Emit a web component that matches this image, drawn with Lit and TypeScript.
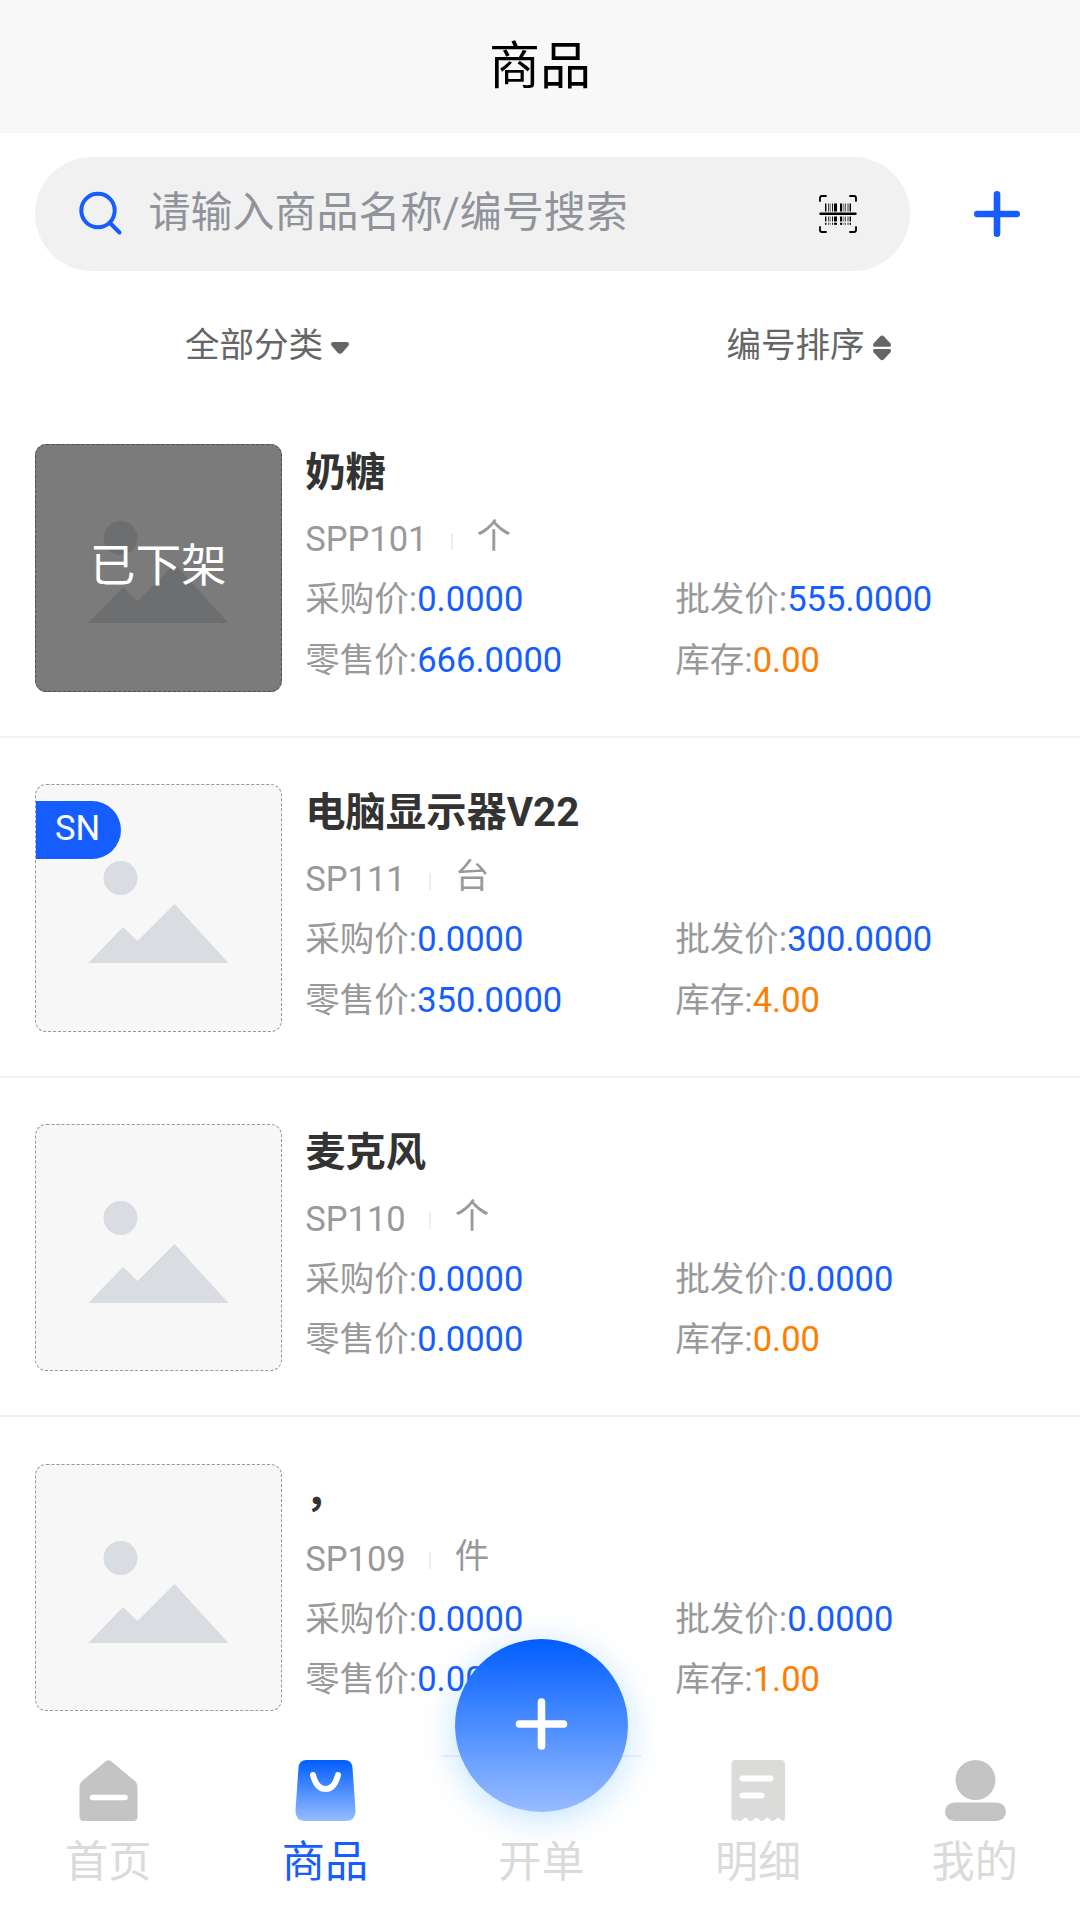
import { LitElement, html, css, svg, nothing } from "lit";
import { customElement, property } from "lit/decorators.js";

interface Product {
  name: string;
  code: string;
  unit: string;
  purchase: string;
  wholesale: string;
  retail: string;
  stock: string;
  off?: boolean;
  sn?: boolean;
}

const products: Product[] = [
  { name: "奶糖", code: "SPP101", unit: "个", purchase: "0.0000", wholesale: "555.0000", retail: "666.0000", stock: "0.00", off: true },
  { name: "电脑显示器V22", code: "SP111", unit: "台", purchase: "0.0000", wholesale: "300.0000", retail: "350.0000", stock: "4.00", sn: true },
  { name: "麦克风", code: "SP110", unit: "个", purchase: "0.0000", wholesale: "0.0000", retail: "0.0000", stock: "0.00" },
  { name: "，", code: "SP109", unit: "件", purchase: "0.0000", wholesale: "0.0000", retail: "0.0000", stock: "1.00" },
];

const bars = [
  [0, 1.4], [3, 0.7], [4.8, 0.6], [7, 0.9], [9, 3], [15, 2.2], [18.6, 0.6], [20.4, 0.6], [22.6, 0.8], [24.6, 1.4],
];

@customElement("product-row")
export class ProductRow extends LitElement {
  @property({ attribute: false }) item!: Product;

  static styles = css`
    :host {
      display: block;
      height: 339.84px;
      box-sizing: border-box;
      padding: 46.2px 34.5px 0;
      border-bottom: 2px solid #f2f2f2;
    }
    .row { display: flex; gap: 23.3px; }
    .thumb {
      position: relative;
      flex: none;
      width: 247.4px;
      height: 247.6px;
      box-sizing: border-box;
      border: 1px dashed #999;
      border-radius: 11.5px;
      background: #f7f7f7;
    }
    .photo { display: block; width: 246px; height: 246px; }
    .mask {
      position: absolute;
      inset: -1px;
      display: flex;
      align-items: center;
      justify-content: center;
      border-radius: 11.5px;
      background: rgba(0, 0, 0, 0.5);
      color: #fff;
      font-size: 45.6px;
      padding-bottom: 12px;
    }
    .sn {
      position: absolute;
      left: 0;
      top: 16px;
      width: 85px;
      height: 58px;
      box-sizing: border-box;
      padding-left: 19.5px;
      border-radius: 0 29px 29px 0;
      background: #165dff;
      color: #fff;
      font-size: 34.56px;
      line-height: 54px;
    }
    .info { flex: 1; color: #999; font-size: 34.56px; }
    .name { height: 60px; line-height: 58px; font-size: 40.32px; font-weight: 700; color: #333; }
    .meta { display: flex; align-items: center; height: 65px; padding-top: 5px; box-sizing: border-box; }
    .sep { width: 2px; height: 17px; margin: 4px 24px 0 23px; background: #eee; }
    .unit { position: relative; top: -6px; }
    .prices { display: grid; grid-template-columns: 370px 1fr; grid-auto-rows: 60.5px; line-height: 60.5px; }
    .price { color: #165dff; }
    .stock { color: #ff7d00; }
  `;

  render() {
    const p = this.item;
    return html`<div class="row">
      <div class="thumb">
        <svg class="photo" viewBox="0 0 246 246" fill="#d9dce1">
          <circle cx="84.500" cy="93" r="17" />
          <path d="M52.300 178 L87 142 L101.500 156 L138.500 119 L192.500 178Z" />
        </svg>
        ${p.off ? html`<div class="mask">已下架</div>` : nothing}
        ${p.sn ? html`<div class="sn">SN</div>` : nothing}
      </div>
      <div class="info">
        <div class="name">${p.name}</div>
        <div class="meta"><span>${p.code}</span><i class="sep"></i><span class="unit">${p.unit}</span></div>
        <div class="prices">
          <div>采购价:<span class="price">${p.purchase}</span></div>
          <div>批发价:<span class="price">${p.wholesale}</span></div>
          <div>零售价:<span class="price">${p.retail}</span></div>
          <div>库存:<span class="stock">${p.stock}</span></div>
        </div>
      </div>
    </div>`;
  }
}

@customElement("app-root")
export class AppRoot extends LitElement {
  static styles = css`
    :host {
      display: flex;
      flex-direction: column;
      position: relative;
      width: 1080px;
      height: 1920px;
      overflow: hidden;
      background: #fff;
      font-family: Roboto, "Noto Sans CJK SC", sans-serif;
    }
    .header {
      flex: none;
      height: 133px;
      box-sizing: border-box;
      padding-bottom: 10px;
      display: flex;
      align-items: center;
      justify-content: center;
      background: #f8f8f8;
      font-size: 51px;
      color: #000;
    }
    .search-bar { flex: none; display: flex; align-items: center; padding: 24px 59px 0 35px; justify-content: space-between; }
    .search {
      display: flex;
      align-items: center;
      width: 875px;
      height: 114px;
      box-sizing: border-box;
      padding: 0 52px 0 42px;
      border-radius: 57px;
      background: #f1f1f1;
    }
    .placeholder { flex: 1; margin-left: 23.5px; font-size: 42px; line-height: 60px; padding-bottom: 2px; color: #909399; }
    .icon { display: block; flex: none; }
    .filters { flex: none; display: grid; grid-template-columns: 1fr 1fr; height: 127px; font-size: 34.56px; color: #666; }
    .filter { display: flex; align-items: center; justify-content: center; padding: 22px 5px 0 0; height: 125px; box-sizing: border-box; line-height: 40px; }
    .filter.sort { padding-right: 2px; }
    .filter .icon { margin-left: 7px; margin-top: 7px; }
    .list { flex: none; height: 1357px; overflow: hidden; }
    .tabs { flex: 1; display: grid; grid-template-columns: repeat(5, 216.6px); background: #fff; }
    .tab { display: flex; flex-direction: column; align-items: center; color: #dbdbd9; font-size: 43.2px; line-height: 60px; }
    .tab .icon { margin-top: 3.5px; margin-bottom: 10.5px; }
    .tab.active { color: #165dff; }
    .tab.center { padding-top: 78px; }
    .halo {
      position: absolute;
      left: 441px;
      top: 1755px;
      width: 200px;
      height: 2px;
      background: #f0f0f0;
    }
    .fab {
      position: absolute;
      left: 455px;
      top: 1639px;
      width: 173px;
      height: 173px;
      border-radius: 50%;
      background: linear-gradient(180deg, #005eff, #98bcff);
      box-shadow: 0 6px 34px rgba(0, 145, 255, 0.25);
    }
  `;

  private tab(label: string, icon: unknown, active = false) {
    return html`<div class="tab ${active ? "active" : ""}">
      <svg class="icon" width="64" height="64" viewBox="-0.500 0 64 64">${icon}</svg>
      <span>${label}</span>
    </div>`;
  }

  render() {
    return html`
      <header class="header">商品</header>
      <div class="search-bar">
        <div class="search">
          <svg class="icon" width="48" height="48" viewBox="0 0 48 48" fill="none" stroke="#165dff" stroke-width="4" stroke-linecap="round">
            <circle cx="21" cy="20.500" r="16.700" /><path d="M33.500 33.500 L42.500 42.500" />
          </svg>
          <span class="placeholder">请输入商品名称/编号搜索</span>
          <svg class="icon" width="40" height="40" viewBox="0 0 40 40" fill="none" stroke="#000" stroke-width="1.800" stroke-linecap="round">
            <path d="M2 7V4Q2 2 4 2H8M32 2H36Q38 2 38 4V7M38 33V36Q38 38 36 38H32M8 38H4Q2 38 2 36V33" />
            <path d="M2.500 19.700H37.500" stroke-width="2.400" />
            <g fill="#000" stroke="none">
              ${bars.map(([x, w]) => svg`<rect x=${7 + x} y="9.500" width=${w} height="8" /><rect x=${7 + x} y="22.500" width=${w} height="5" /><rect x=${7 + x} y="28.800" width=${w} height="2" />`)}
            </g>
          </svg>
        </div>
        <svg class="icon" width="48" height="48" viewBox="0 0 48 48" fill="none" stroke="#165dff" stroke-width="6.600" stroke-linecap="round">
          <path d="M24 4.300V43.700M4.300 24H43.700" />
        </svg>
      </div>
      <div class="filters">
        <div class="filter"><span>全部分类</span>
          <svg class="icon" width="20" height="14" viewBox="0 0 20 14"><path d="M3.500 1H16.500Q20 1 18.500 4.500L12.500 11.500Q10 14 7.500 11.500L1.500 4.500Q0 1 3.500 1Z" fill="#666" /></svg>
        </div>
        <div class="filter sort"><span>编号排序</span>
          <svg class="icon" width="20" height="28" viewBox="0 0 20 28" fill="#666"><path d="M3 12.800H17Q20 12.800 18.500 9.500L12 2.500Q10 0.500 8 2.500L1.500 9.500Q0 12.800 3 12.800Z" /><path d="M3 15H17Q20 15 18.500 18.300L12 25.300Q10 27.300 8 25.300L1.500 18.300Q0 15 3 15Z" /></svg>
        </div>
      </div>
      <div class="list">${products.map((p) => html`<product-row .item=${p}></product-row>`)}</div>
      <nav class="tabs">
        ${this.tab("首页", svg`<path d="M29 2.500Q32 0 35 2.500L59 22.500Q61 24.500 61 28V57.500Q61 62 56.500 62H7.500Q3 62 3 57.500V28Q3 24.500 5 22.500Z" fill="#c4c4c4" /><path d="M16 38.500H48.500" stroke="#fff" stroke-width="5.500" stroke-linecap="round" />`)}
        ${this.tab("商品", svg`<defs><linearGradient id="bag" x1="0" y1="0" x2="0" y2="1"><stop offset="0" stop-color="#005eff" /><stop offset="1" stop-color="#98bcff" /></linearGradient></defs><path d="M13 1H51Q58.500 1 59 9L62 51Q62.500 62 52 62H12Q1.500 62 2 51L5 9Q5.500 1 13 1Z" fill="url(#bag)" /><path d="M19.500 16Q23 30 32 30Q41 30 44.500 16" fill="none" stroke="#fff" stroke-width="6" stroke-linecap="round" />`, true)}
        <div class="tab center"><span>开单</span></div>
        ${this.tab("明细", svg`<path d="M9 1H54.500Q58.500 1 58.500 5V60Q56.500 63 54 60.500Q51.500 57 49 60.500Q46 63.500 43.500 60.500Q41 57 38 60.500Q35.500 63.500 32.500 60.500Q30 57 27 60.500Q24 63.500 21.500 60.500Q19 57 16 60.500Q13 63.500 10.500 60.500Q8 63 5 60V5Q5 1 9 1Z" fill="#dbdbd9" /><path d="M16 19.500H44M16 36.500H35" stroke="#fff" stroke-width="6" stroke-linecap="round" />`)}
        ${this.tab("我的", svg`<g fill="#c4c4c4"><circle cx="32" cy="21" r="20" /><rect x="1.500" y="43.500" width="61" height="18.500" rx="9.250" /></g>`)}
      </nav>
      <div class="halo"></div>
      <div class="fab">
        <svg class="icon" width="173" height="173" viewBox="0 0 173 173"><path d="M86.500 63V107M64.500 85H108.500" stroke="#fff" stroke-width="7.600" stroke-linecap="round" /></svg>
      </div>
    `;
  }
}
